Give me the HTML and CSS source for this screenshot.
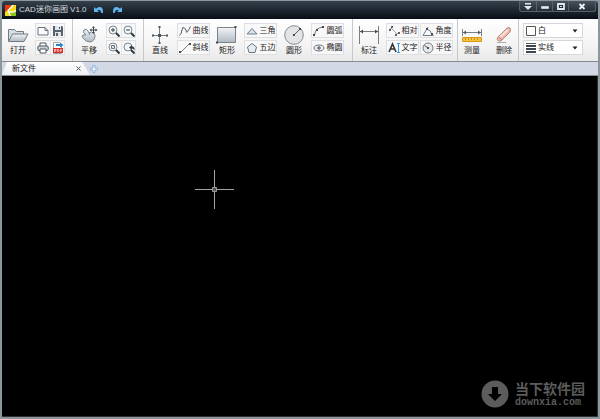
FILE: index.html
```html
<!DOCTYPE html>
<html lang="zh-CN">
<head>
<meta charset="utf-8">
<title>CAD迷你画图 V1.0</title>
<link rel="stylesheet" href="styles.css">
</head>
<body>
<div class="window">
  <header class="titlebar">
    <svg class="logo" width="11" height="11" viewBox="0 0 11 11"><path fill="#f7d916" d="M0 0h11v11H0z"/><path fill="#e8391c" d="M0 0h7L2.500 5.500 0 7z"/><path fill="#8cc41e" d="M11 11H5L3.500 7Q8 8 11 6z"/><path d="M8.500 0 3 5.500 5.500 11M3 6q4 2.500 8-.5" fill="none" stroke="#fff" stroke-width="1.200"/></svg>
    <h1 class="title">CAD迷你画图 V1.0</h1>
    <div class="history">
      <button aria-label="撤销"><svg width="10" height="8" viewBox="0 0 10 8"><path d="M0 1v5h5L3.300 4.300Q6 2.500 7.500 7L9 7Q9.500 0 4 1.300L2 2.700z" fill="#63b7ef"/></svg></button>
      <button aria-label="重做"><svg width="10" height="8" viewBox="0 0 10 8"><path d="M10 1v5H5L6.700 4.300Q4 2.500 2.500 7L1 7Q.5 0 6 1.300L8 2.700z" fill="#63b7ef"/></svg></button>
    </div>
    <div class="controls">
      <button aria-label="菜单"><svg width="8" height="7" viewBox="0 0 8 7"><path d="M1 0h6v1.500H1zM0 3h8L4 7z" fill="#e4e8ec"/></svg></button>
      <button aria-label="最小化"><svg width="8" height="7" viewBox="0 0 8 7"><path d="M.5 3.500h7v2h-7z" fill="#e4e8ec" stroke="#fff" stroke-width=".5"/></svg></button>
      <button aria-label="最大化"><svg width="8" height="7" viewBox="0 0 8 7"><path d="M1 1h6v5H1z" fill="#222b34" stroke="#e4e8ec" stroke-width="1.800"/><path d="M3 3h2v1H3z" fill="#e4e8ec"/></svg></button>
      <button class="close" aria-label="关闭"><svg width="8" height="7" viewBox="0 0 8 7"><path d="m1.500 1 5 5m0-5-5 5" stroke="#eef1f4" stroke-width="1.800"/></svg></button>
    </div>
  </header>

  <div class="toolbar">
    <div class="group files">
      <button class="big"><svg width="22" height="20" viewBox="0 0 22 20"><defs><linearGradient id="steel" x2="0" y2="1"><stop stop-color="#f2f4f6"/><stop offset="1" stop-color="#afbac4"/></linearGradient></defs><path d="M1.500 16V4.500h6l2 2h7V9" fill="#d5dce2" stroke="#707b85"/><path d="M1.500 16.500 5.500 9H21l-4 7.500z" fill="url(#steel)" stroke="#707b85"/></svg>打开</button>
      <div class="stack">
        <div class="pair">
          <button aria-label="新建"><svg width="12" height="12" viewBox="0 0 12 12"><path d="M1 2.500h7l3 3V10H1zM8 2.500v3h3" fill="#f8fafb" stroke="#68737e"/></svg></button>
          <button aria-label="保存"><svg width="12" height="12" viewBox="0 0 12 12"><path d="M1 1h9l1 1v9H1z" fill="#56616e"/><path d="M3 1h6v4H3zM3 7h6v4H3z" fill="#dfe5eb"/><path d="M7 2h1v2H7zM4 8h2v3H4z" fill="#56616e"/></svg></button>
        </div>
        <div class="pair">
          <button aria-label="打印"><svg width="12" height="12" viewBox="0 0 12 12"><path d="M3 4V1h6v3" fill="#fff" stroke="#505963"/><rect x=".8" y="4" width="10.400" height="4.500" rx="1" fill="#cbd2d8" stroke="#505963"/><path d="M3 7h6v4H3z" fill="#fff" stroke="#505963"/></svg></button>
          <button aria-label="导出 PDF"><svg width="12" height="12" viewBox="0 0 12 12"><path d="M1.500.5h6l2 2v9h-8z" fill="#fff" stroke="#9ba3ab"/><path d="M4 2h4V.5L11.500 3 8 5.500V4H4z" fill="#2484cf"/><path d="M1 6h10v5H1z" fill="#d92c24"/><path d="M2.500 10V7.500H4V9H2.500M5.500 7.500v2h1l.5-1-.5-1zM8.500 10V7.500H10M8.500 8.700H10" fill="none" stroke="#fff" stroke-width=".6"/></svg></button>
        </div>
      </div>
    </div>

    <div class="group view">
      <button class="big"><svg width="18" height="20" viewBox="0 0 18 20"><path d="M4 5Q6 3 8 6l1 2Q12 6 13 8q2 0 2 3 0 5-5 6Q6 17 3 13q-2-2 0-3l3 0Q2 7 4 5z" fill="url(#steel)" stroke="#7b858f"/><path d="M6 10 4 8M9 8l1 2" fill="none" stroke="#7b858f"/><path d="M13.500 2v6M10.500 5h6" stroke="#3f464d"/><path d="M12 3h3l-1.500-2zM12 7h3l-1.500 2zM11.500 3.500v3L9.500 5zM15.500 3.500v3l2-1.500z" fill="#3f464d"/></svg>平移</button>
      <div class="stack">
        <div class="pair">
          <button aria-label="放大"><svg width="12" height="12" viewBox="0 0 12 12"><circle cx="5" cy="5" r="4" fill="#f0f5f7" stroke="#7c8790"/><path d="M3 5h4M5 3v4" stroke="#39424b"/><path d="m8 8 3.500 3.500" stroke="#303840" stroke-width="2"/></svg></button>
          <button aria-label="缩小"><svg width="12" height="12" viewBox="0 0 12 12"><circle cx="5" cy="5" r="4" fill="#f0f5f7" stroke="#7c8790"/><path d="M3 5h4" stroke="#39424b"/><path d="m8 8 3.500 3.500" stroke="#303840" stroke-width="2"/></svg></button>
        </div>
        <div class="pair">
          <button aria-label="窗口缩放"><svg width="12" height="12" viewBox="0 0 12 12"><circle cx="5" cy="5" r="4" fill="#f0f5f7" stroke="#7c8790"/><path d="M3.500 3.500h3v3h-3z" fill="#d5dde2" stroke="#6b757e"/><path d="m8 8 3.500 3.500" stroke="#303840" stroke-width="2"/></svg></button>
          <button aria-label="上一视图"><svg width="12" height="12" viewBox="0 0 12 12"><circle cx="5" cy="5" r="4" fill="#f0f5f7" stroke="#7c8790"/><path d="m8 8 3.500 3.500" stroke="#303840" stroke-width="2"/><path d="M6 5.500 9 3v1.500q3 0 2.500 4Q10.500 6.500 9 6.500V8z" fill="#303840"/></svg></button>
        </div>
      </div>
    </div>

    <div class="group shapes">
      <button class="big"><svg width="18" height="20" viewBox="0 0 18 20"><path d="M8.500 2v17M1 10.500h16" stroke="#747b82"/><path d="M7 9h3v3H7zM7.500 1h2v2h-2zM7.500 17h2v2h-2zM1 9.500h2v2H1zM15 9.500h2v2h-2z" fill="#4b535b"/></svg>直线</button>
      <div class="stack">
        <button class="small"><svg width="12" height="12" viewBox="0 0 12 12"><path d="M.5 10.500Q2.500 9 3 5T5.500 3 7.500 7 11.500 1.500" fill="none" stroke="#555d65"/></svg>曲线</button>
        <button class="small"><svg width="12" height="12" viewBox="0 0 12 12"><path d="M1.500 10.500 10.500 1.500" stroke="#747b82"/><path d="M0 9h2v2H0zM10 1h2v2h-2z" fill="#454c54"/></svg>斜线</button>
      </div>
      <button class="big"><svg width="22" height="20" viewBox="0 0 22 20"><path d="M1.500 2.500h18v15h-18z" fill="url(#steel)" stroke="#7b8289"/><path d="M18.500 1h2v2h-2zM0 16.500h2v2H0z" fill="#3f464e"/></svg>矩形</button>
      <div class="stack">
        <button class="small"><svg width="12" height="12" viewBox="0 0 12 12"><path d="M6 3.500 11 9H1z" fill="#d5e0e8" stroke="#727c85"/></svg>三角</button>
        <button class="small"><svg width="12" height="12" viewBox="0 0 12 12"><path d="m6 1.500 4.500 3.500L9 10.500H3L1.500 5z" fill="#e7edf2" stroke="#68737d"/></svg>五边</button>
      </div>
      <button class="big"><svg width="22" height="20" viewBox="0 0 22 20"><circle cx="11" cy="10" r="9.300" fill="#e2e4e6" stroke="#858b91"/><path d="m11 10 6-6" stroke="#596169"/><path d="M10 9h2v2h-2zM16 3h2v2h-2z" fill="#40474f"/></svg>圆形</button>
      <div class="stack">
        <button class="small"><svg width="12" height="12" viewBox="0 0 12 12"><path d="M1.500 10.500Q2 2.500 10.500 2" fill="none" stroke="#69717a"/><path d="M0 9h2v2H0zM3 4h2v2H3zM9 1h2v2H9z" fill="#414950"/></svg>圆弧</button>
        <button class="small"><svg width="12" height="12" viewBox="0 0 12 12"><ellipse cx="6" cy="6" rx="5" ry="3" fill="#edf1f4" stroke="#66717b"/><path d="M4 6h4M6 4v4" stroke="#454d56"/></svg>椭圆</button>
      </div>
    </div>

    <div class="group notes">
      <button class="big"><svg width="22" height="20" viewBox="0 0 22 20"><path d="M1.500 1v18M20.500 1v18M2 6.500h18" stroke="#777d83"/><path d="m2 6.500 3-2v4zM20 6.500l-3-2v4z" fill="#454c53"/></svg>标注</button>
      <div class="stack">
        <button class="small"><svg width="12" height="12" viewBox="0 0 12 12"><path d="m3 3 6 6M1 5l3-3M7 11l4-4" stroke="#9aa1a7"/><path d="M3 1h2v2H3zM1 4h2v2H1zM7 9h2v2H7zM10 7h2v2h-2z" fill="#59626a"/></svg>相对</button>
        <button class="small"><svg width="12" height="12" viewBox="0 0 12 12"><path d="M11.500 10.500H1L6 2M5 4q4 1 5 6" fill="none" stroke="#737b83"/><path d="M4 3h2v2H4zM9 8h2v2H9z" fill="#444c54"/></svg>角度</button>
        <button class="small"><svg width="12" height="12" viewBox="0 0 12 12"><path d="M1 10 4.500 2 8 10M2.500 7h4" fill="none" stroke="#303438" stroke-width="1.600"/><path d="M9 1.500h3M9 10.500h3M10.500 1.500v9" stroke="#329be0"/></svg>文字</button>
        <button class="small"><svg width="12" height="12" viewBox="0 0 12 12"><circle cx="6" cy="6" r="5" fill="#e4e8eb" stroke="#747c84"/><path d="M6 6 2.500 3.500" stroke="#4c545c"/><path d="M5 5h2v2H5z" fill="#4c545c"/></svg>半径</button>
      </div>
    </div>

    <div class="group edit">
      <button class="big"><svg width="22" height="20" viewBox="0 0 22 20"><path d="M1.500 4v7M20.500 4v7M2 7.500h18" stroke="#7a8086"/><path d="m2 7.500 3-2v4zM20 7.500l-3-2v4z" fill="#555b61"/><path d="M1.500 12.500h19v4h-19z" fill="#f8c338" stroke="#d79718"/><path d="M4.500 13v2m3-2v2m3-2v2m3-2v2m3-2v2" stroke="#c98f22"/></svg>测量</button>
      <button class="big"><svg width="18" height="20" viewBox="0 0 18 20"><path d="M2.500 12.500 12 3q2-1 3 0t0 4l-9 9H3.500q-2-1-1-3.500z" fill="#efb6a7" stroke="#b98b80"/><path d="m5 12 8-7" stroke="#fae0d5" stroke-width="2"/><path d="m3 11 4 4" stroke="#c28073"/><path d="M2 17.500h9" stroke="#a7acb1"/></svg>删除</button>
    </div>

    <div class="group style">
      <div class="field">
        <svg width="12" height="12" viewBox="0 0 12 12"><path d="M1.500 1.500h9v9h-9z" fill="#fff" stroke="#555"/></svg>
        <select aria-label="颜色"><option>白</option></select>
        <svg width="6" height="4" viewBox="0 0 6 4"><path d="M.5.5h5L3 3.500z" fill="#222"/></svg>
      </div>
      <div class="field">
        <svg width="12" height="12" viewBox="0 0 12 12"><path d="M1 1.500h10" stroke="#555"/><path d="M1 4h10M1 7h10M1 10h10" stroke="#3d4550" stroke-width="2"/></svg>
        <select aria-label="线型"><option>实线</option></select>
        <svg width="6" height="4" viewBox="0 0 6 4"><path d="M.5.5h5L3 3.500z" fill="#222"/></svg>
      </div>
    </div>
  </div>

  <nav class="tabs">
    <div class="tab">
      <a href="#drawing">新文件</a>
      <button aria-label="关闭标签"><svg width="5" height="5" viewBox="0 0 5 5"><path d="m.5.5 4 4m0-4-4 4" stroke="#555"/></svg></button>
    </div>
    <button class="add" aria-label="新建标签"><svg width="8" height="8" viewBox="0 0 8 8"><path d="M3 .5h2V3h2.500v2H5v2.500H3V5H.5V3H3z" fill="#edf6ff" stroke="#91b5dc"/></svg></button>
  </nav>

  <main class="drawing" id="drawing">
    <svg class="cursor" width="39" height="39" viewBox="0 0 39 39"><path d="M0 19.500h39M19.500 0v39" stroke="#a4a4a4"/><path d="M17.500 17.500h4v4h-4z" fill="#555" stroke="#999"/></svg>
    <div class="brand">
      <svg width="28" height="28" viewBox="0 0 28 28"><circle cx="14" cy="14" r="13.500" fill="#5c5c5c"/><path d="M11 7h6v7h4l-7 7-7-7h4z" fill="#000"/></svg>
      <div><p class="brand-name">当下软件园</p><p class="brand-site">downxia.com</p></div>
    </div>
  </main>
</div>
</body>
</html>
```
FILE: styles.css
```css
* { box-sizing: border-box; }

body {
  margin: 0;
  background: #8b969d;
  font: 8px/10px "Liberation Sans", "Noto Sans CJK SC", sans-serif;
  color: #222;
}

button {
  display: flex;
  align-items: center;
  justify-content: center;
  margin: 0;
  padding: 0;
  border: 0;
  background: none;
  color: inherit;
  font: inherit;
  white-space: nowrap;
}

svg { display: block; flex: none; }

.window {
  display: flex;
  flex-direction: column;
  min-height: 100vh;
  border: solid #8b969d;
  border-width: 1px 2px 2px;
  border-radius: 4px 4px 0 0;
}

.titlebar {
  display: flex;
  align-items: center;
  height: 18px;
  padding: 0 2px 0 3px;
  background: linear-gradient(#34404b, #202a34 45%, #080e15);
  border-radius: 3px 3px 0 0;
}

.title {
  margin: 0 0 0 3px;
  font-size: 8px;
  font-weight: 400;
  color: #d5dade;
}

.history { display: flex; gap: 8px; margin-left: 7px; }

.controls {
  display: flex;
  align-self: flex-start;
  margin-left: auto;
  border: 1px solid #56616b;
  border-top: 0;
  border-radius: 0 0 3px 3px;
  background: linear-gradient(#46515c, #252f39);
}

.controls button { width: 16px; height: 10px; }
.controls button + button { border-left: 1px solid #56616b; }
.controls .close { width: 27px; }

.toolbar {
  display: flex;
  height: 42px;
  background: linear-gradient(#fff, #f4f4f4 60%, #e9e9e9);
}

.group {
  display: flex;
  align-items: flex-start;
  flex: none;
  gap: 5px;
  padding: 4px 7px 0 4px;
  border-right: 1px solid #c6c8ca;
}

.big {
  flex-direction: column;
  gap: 1px;
  width: 24px;
  padding-top: 2px;
}

.stack { display: grid; gap: 2px; }

.shapes { padding-right: 8px; }
.notes .stack { grid-template-columns: auto auto; column-gap: 1px; }
.notes { padding: 4px 4px 0; }
.edit { padding: 4px 2px 0; gap: 8px; }

.pair {
  display: flex;
  border: 1px solid #dddfe1;
  background: #f8f8f8;
}

.pair button { width: 14px; height: 13px; }
.pair button + button { border-left: 1px solid #e5e6e8; }

.small {
  gap: 2px;
  width: 33px;
  height: 15px;
  border: 1px solid #dddfe1;
  background: #f8f8f8;
}

.style {
  flex: 1;
  flex-direction: column;
  gap: 2px;
  border-right: 0;
}

.field {
  display: flex;
  align-items: center;
  gap: 1px;
  width: 60px;
  height: 15px;
  padding: 0 4px 0 1px;
  border: 1px solid #d5d7d9;
  background: #fff;
}

.field select {
  flex: 1;
  min-width: 0;
  padding: 0;
  border: 0;
  appearance: none;
  background: none;
  color: inherit;
  font: inherit;
}

.tabs {
  display: flex;
  align-items: center;
  height: 15px;
  border-top: 1px solid #858b91;
  border-bottom: 1px solid #858b91;
  background: #d3d9e4;
}

.tab {
  display: flex;
  align-items: center;
  justify-content: space-between;
  width: 88px;
  height: 13px;
  padding: 0 9px 0 10px;
  background: linear-gradient(#fff, #eceff5);
  clip-path: polygon(5px 0, 80px 0, 88px 100%, 0 100%);
}

.tab a { color: inherit; text-decoration: none; }

.drawing {
  position: relative;
  flex: 1;
  border: solid #303030;
  border-width: 0 1px 1px 0;
  background: #000;
}

.cursor { position: absolute; left: 193px; top: 94px; }

.brand {
  position: absolute;
  right: 12px;
  bottom: 8px;
  display: flex;
  align-items: center;
  gap: 6px;
  color: #5c5c5c;
}

.brand p { margin: 0; }
.brand-name { font-size: 14px; line-height: 16px; font-weight: 700; }
.brand-site { font: 700 10px/11px "Liberation Mono", monospace; }
```
